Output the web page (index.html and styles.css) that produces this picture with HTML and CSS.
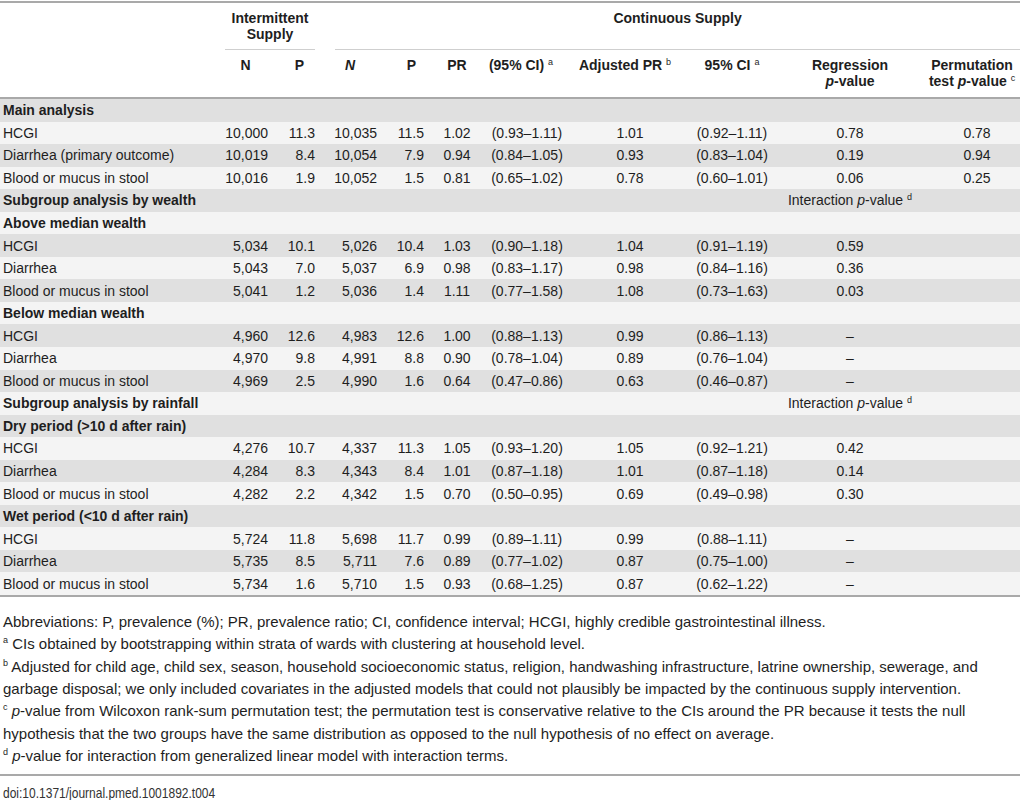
FILE: index.html
```html
<!DOCTYPE html>
<html lang="en">

<head>
    <meta charset="UTF-8">
    <meta name="viewport" content="width=device-width, initial-scale=1.0">
    <title>Table 4</title>
    <link rel="stylesheet" href="styles.css">
</head>

<body>
    <div class="page">
        <table class="results">
            <colgroup>
                <col class="c-label">
                <col class="c-n">
                <col class="c-p">
                <col class="c-n2">
                <col class="c-p">
                <col class="c-pr">
                <col class="c-ci">
                <col class="c-adj">
                <col class="c-ci2">
                <col class="c-reg">
                <col class="c-perm">
            </colgroup>
            <thead>
                <tr class="group-row">
                    <th></th>
                    <th colspan="2"><div class="group group-left">Intermittent<br>Supply</div></th>
                    <th colspan="8"><div class="group group-right">Continuous Supply</div></th>
                </tr>
                <tr class="col-row">
                    <th></th>
                    <th>N</th>
                    <th>P</th>
                    <th class="h-n2"><i>N</i></th>
                    <th class="h-p2">P</th>
                    <th>PR</th>
                    <th class="h-ci">(95% CI) <sup>a</sup></th>
                    <th class="h-adj">Adjusted PR <sup>b</sup></th>
                    <th>95% CI <sup>a</sup></th>
                    <th>Regression<br><i>p</i>-value</th>
                    <th>Permutation<br>test <i>p</i>-value <sup>c</sup></th>
                </tr>
            </thead>
            <tbody>
                <tr class="section"><td colspan="11">Main analysis</td></tr>
                <tr><td>HCGI</td><td class="num">10,000</td><td class="num">11.3</td><td class="num">10,035</td><td class="num">11.5</td><td>1.02</td><td>(0.93–1.11)</td><td>1.01</td><td>(0.92–1.11)</td><td>0.78</td><td class="perm">0.78</td></tr>
                <tr><td>Diarrhea (primary outcome)</td><td class="num">10,019</td><td class="num">8.4</td><td class="num">10,054</td><td class="num">7.9</td><td>0.94</td><td>(0.84–1.05)</td><td>0.93</td><td>(0.83–1.04)</td><td>0.19</td><td class="perm">0.94</td></tr>
                <tr><td>Blood or mucus in stool</td><td class="num">10,016</td><td class="num">1.9</td><td class="num">10,052</td><td class="num">1.5</td><td>0.81</td><td>(0.65–1.02)</td><td>0.78</td><td>(0.60–1.01)</td><td>0.06</td><td class="perm">0.25</td></tr>

                <tr class="section"><td colspan="9">Subgroup analysis by wealth</td><td class="note">Interaction <i>p</i>-value <sup>d</sup></td><td></td></tr>
                <tr class="section"><td colspan="11">Above median wealth</td></tr>
                <tr><td>HCGI</td><td class="num">5,034</td><td class="num">10.1</td><td class="num">5,026</td><td class="num">10.4</td><td>1.03</td><td>(0.90–1.18)</td><td>1.04</td><td>(0.91–1.19)</td><td>0.59</td><td></td></tr>
                <tr><td>Diarrhea</td><td class="num">5,043</td><td class="num">7.0</td><td class="num">5,037</td><td class="num">6.9</td><td>0.98</td><td>(0.83–1.17)</td><td>0.98</td><td>(0.84–1.16)</td><td>0.36</td><td></td></tr>
                <tr><td>Blood or mucus in stool</td><td class="num">5,041</td><td class="num">1.2</td><td class="num">5,036</td><td class="num">1.4</td><td>1.11</td><td>(0.77–1.58)</td><td>1.08</td><td>(0.73–1.63)</td><td>0.03</td><td></td></tr>
                <tr class="section"><td colspan="11">Below median wealth</td></tr>
                <tr><td>HCGI</td><td class="num">4,960</td><td class="num">12.6</td><td class="num">4,983</td><td class="num">12.6</td><td>1.00</td><td>(0.88–1.13)</td><td>0.99</td><td>(0.86–1.13)</td><td>–</td><td></td></tr>
                <tr><td>Diarrhea</td><td class="num">4,970</td><td class="num">9.8</td><td class="num">4,991</td><td class="num">8.8</td><td>0.90</td><td>(0.78–1.04)</td><td>0.89</td><td>(0.76–1.04)</td><td>–</td><td></td></tr>
                <tr><td>Blood or mucus in stool</td><td class="num">4,969</td><td class="num">2.5</td><td class="num">4,990</td><td class="num">1.6</td><td>0.64</td><td>(0.47–0.86)</td><td>0.63</td><td>(0.46–0.87)</td><td>–</td><td></td></tr>

                <tr class="section"><td colspan="9">Subgroup analysis by rainfall</td><td class="note">Interaction <i>p</i>-value <sup>d</sup></td><td></td></tr>
                <tr class="section"><td colspan="11">Dry period (&gt;10 d after rain)</td></tr>
                <tr><td>HCGI</td><td class="num">4,276</td><td class="num">10.7</td><td class="num">4,337</td><td class="num">11.3</td><td>1.05</td><td>(0.93–1.20)</td><td>1.05</td><td>(0.92–1.21)</td><td>0.42</td><td></td></tr>
                <tr><td>Diarrhea</td><td class="num">4,284</td><td class="num">8.3</td><td class="num">4,343</td><td class="num">8.4</td><td>1.01</td><td>(0.87–1.18)</td><td>1.01</td><td>(0.87–1.18)</td><td>0.14</td><td></td></tr>
                <tr><td>Blood or mucus in stool</td><td class="num">4,282</td><td class="num">2.2</td><td class="num">4,342</td><td class="num">1.5</td><td>0.70</td><td>(0.50–0.95)</td><td>0.69</td><td>(0.49–0.98)</td><td>0.30</td><td></td></tr>
                <tr class="section"><td colspan="11">Wet period (&lt;10 d after rain)</td></tr>
                <tr><td>HCGI</td><td class="num">5,724</td><td class="num">11.8</td><td class="num">5,698</td><td class="num">11.7</td><td>0.99</td><td>(0.89–1.11)</td><td>0.99</td><td>(0.88–1.11)</td><td>–</td><td></td></tr>
                <tr><td>Diarrhea</td><td class="num">5,735</td><td class="num">8.5</td><td class="num">5,711</td><td class="num">7.6</td><td>0.89</td><td>(0.77–1.02)</td><td>0.87</td><td>(0.75–1.00)</td><td>–</td><td></td></tr>
                <tr><td>Blood or mucus in stool</td><td class="num">5,734</td><td class="num">1.6</td><td class="num">5,710</td><td class="num">1.5</td><td>0.93</td><td>(0.68–1.25)</td><td>0.87</td><td>(0.62–1.22)</td><td>–</td><td></td></tr>
            </tbody>
        </table>

        <div class="notes">
            <p>Abbreviations: P, prevalence (%); PR, prevalence ratio; CI, confidence interval; HCGI, highly credible gastrointestinal illness.</p>
            <p><sup>a</sup> CIs obtained by bootstrapping within strata of wards with clustering at household level.</p>
            <p><sup>b</sup> Adjusted for child age, child sex, season, household socioeconomic status, religion, handwashing infrastructure, latrine ownership, sewerage, and garbage disposal; we only included covariates in the adjusted models that could not plausibly be impacted by the continuous supply intervention.</p>
            <p><sup>c</sup> <i>p</i>-value from Wilcoxon rank-sum permutation test; the permutation test is conservative relative to the CIs around the PR because it tests the null hypothesis that the two groups have the same distribution as opposed to the null hypothesis of no effect on average.</p>
            <p><sup>d</sup> <i>p</i>-value for interaction from generalized linear model with interaction terms.</p>
        </div>

        <div class="doi"><span>doi:10.1371/journal.pmed.1001892.t004</span></div>
    </div>
</body>

</html>
```

FILE: styles.css
```css
body {
    margin: 0;
    padding: 0;
    background-color: white;
    color: #1e1e1e;
    font-family: 'Liberation Sans', Arial, sans-serif;
    font-size: 14px;
}

.page {
    width: 1020px;
    padding-top: 1px;
}

sup {
    font-size: 9px;
    font-weight: normal;
    line-height: 0;
    vertical-align: 5px;
}

/* Table */
.results {
    width: 1020px;
    table-layout: fixed;
    border-collapse: collapse;
    border-top: 2px solid #a9a9a9;
    border-bottom: 2px solid #a9a9a9;
}

.c-label { width: 215px; }
.c-n { width: 61px; }
.c-p { width: 47px; }
.c-n2 { width: 62px; }
.c-pr { width: 50px; }
.c-ci { width: 90px; }
.c-adj { width: 116px; }
.c-ci2 { width: 88px; }
.c-reg { width: 148px; }
.c-perm { width: 96px; }

.results th {
    font-weight: bold;
    text-align: center;
    vertical-align: top;
    line-height: 16px;
    padding: 7px 0 0 0;
    white-space: nowrap;
}

.group {
    border-bottom: 1px solid #cfcfcf;
    padding-bottom: 7px;
    height: 32px;
}

.group-left {
    margin: 0 8px 0 10px;
}

.group-right {
    margin: 0 0 0 12px;
}

.col-row th {
    height: 40px;
    border-bottom: 2px solid #a9a9a9;
}

.col-row .h-n2 {
    padding-right: 8px;
}

.col-row .h-p2 {
    padding-left: 6px;
}

.col-row .h-ci {
    padding-right: 12px;
}

.col-row .h-adj {
    padding-right: 10px;
}

.results td {
    padding: 0;
    height: 22.55px;
    line-height: 16px;
    text-align: center;
    white-space: nowrap;
    background-color: #f4f4f4;
}

.results tbody tr:nth-child(odd) td {
    background-color: #e0e0e0;
}

.results td:first-child {
    text-align: left;
    padding-left: 3px;
}

.results td.num {
    text-align: right;
    padding-right: 8px;
}

.results td.perm {
    padding-left: 10px;
}

.section td:first-child {
    font-weight: bold;
}

.results td.note {
    font-weight: normal;
}

/* Footnotes */
.notes {
    padding: 14px 0 7px 3px;
    border-bottom: 2px solid #a9a9a9;
    font-size: 15px;
    line-height: 22.3px;
}

.notes p {
    margin: 0;
}

.notes sup {
    line-height: 1;
    vertical-align: 6px;
}

.doi {
    padding: 8px 0 0 3px;
    font-size: 15px;
    line-height: 18px;
    color: #333;
}

.doi span {
    display: inline-block;
    transform: scaleX(0.8);
    transform-origin: left center;
}
```
